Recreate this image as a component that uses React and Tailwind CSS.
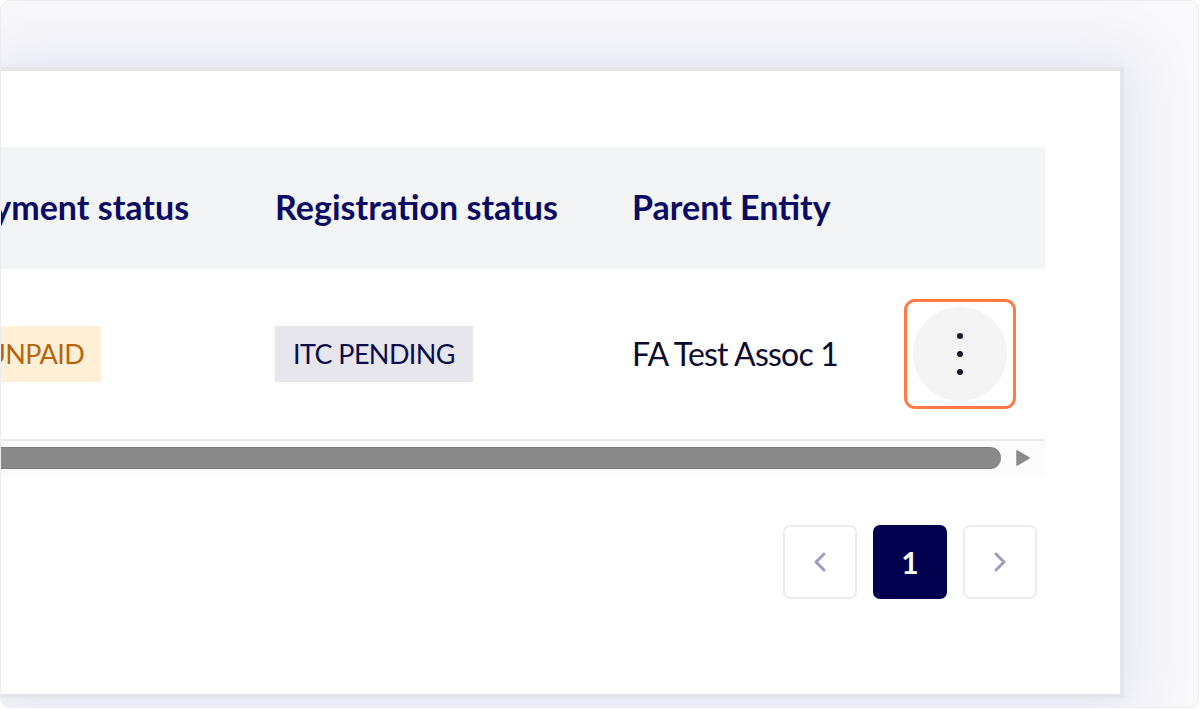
import React, { useLayoutEffect, useRef } from "react";

export default function App() {
  const scrollRef = useRef(null);
  const regRef = useRef(null);

  useLayoutEffect(() => {
    const c = scrollRef.current;
    const r = regRef.current;
    if (c && r) {
      const cr = c.getBoundingClientRect();
      const rr = r.getBoundingClientRect();
      c.scrollLeft = c.scrollLeft + (rr.left - cr.left) - 271;
    }
  }, []);

  const font = { fontFamily: "Lato, 'Noto Sans', sans-serif" };

  return (
    <div className="w-[1200px] h-[709px] bg-white" style={font}>
      <div className="w-[1199px] h-[708px] rounded-[10px] border border-[#ececf2] bg-[#f9f9fb] overflow-hidden pt-[66px] pr-[74px] pb-[9px]">
        <div className="h-full bg-white border-[4px] border-l-0 border-[#e5e5eb] shadow-[0_0_50px_12px_rgba(225,225,242,0.9)] pt-[76px] pr-[76px]">
          <div ref={scrollRef} className="overflow-hidden w-[1044px]">
            <div className="flex flex-col w-max min-w-full">
              {/* header */}
              <div className="flex items-center h-[122px] pb-[4px] bg-[#f3f4f6] text-[34px] font-bold text-[#0b0b66]">
                <div className="flex-none pl-[24px] pr-[86px] whitespace-nowrap">Payment status</div>
                <div ref={regRef} className="flex-none w-[357px] whitespace-nowrap">Registration status</div>
                <div className="flex-none w-[250px] whitespace-nowrap">Parent Entity</div>
                <div className="flex-none w-[163px]"></div>
              </div>
              {/* row */}
              <div className="flex items-center h-[172px] border-b-2 border-[#e9e9ee]">
                <div className="flex-none pl-[24px] pr-[86px] whitespace-nowrap">
                  <span className="invisible text-[34px] font-bold block h-0 overflow-hidden">Payment status</span>
                  <span className="inline-flex items-center h-[56px] pl-[30px] pr-[17px] bg-[#fdf0d7] text-[#b8640c] text-[27px] tracking-[-0.6px]">UNPAID</span>
                </div>
                <div className="flex-none w-[357px] whitespace-nowrap">
                  <span className="inline-flex items-center h-[56px] px-[18px] bg-[#e6e6ec] text-[#0c0c4e] text-[27px] tracking-[-0.6px]">ITC PENDING</span>
                </div>
                <div className="flex-none w-[250px] whitespace-nowrap text-[32px] text-[#0b0b2e] tracking-[-0.8px]">FA Test Assoc 1</div>
                <div className="flex-none w-[163px] flex items-center">
                  <div className="ml-[22px] w-[112px] h-[110px] rounded-[11px] border-[3px] border-[#ff7a45] flex items-center justify-center">
                    <div className="w-[94px] h-[94px] rounded-full bg-[#f4f4f4] flex flex-col items-center justify-center gap-[12px]">
                      <span className="w-[6px] h-[6px] rounded-full bg-[#1b1b2f]"></span>
                      <span className="w-[6px] h-[6px] rounded-full bg-[#1b1b2f]"></span>
                      <span className="w-[6px] h-[6px] rounded-full bg-[#1b1b2f]"></span>
                    </div>
                  </div>
                </div>
              </div>
            </div>
          </div>
          {/* scrollbar */}
          <div className="w-[1044px] h-[34px] bg-[#fbfbfb] flex items-center">
            <div className="flex-1 h-[22px] bg-[#8a8a8a] border-y border-[#7a7a7a] rounded-r-full"></div>
            <div className="w-[44px] flex items-center justify-center">
              <svg width="14" height="16" viewBox="0 0 14 16">
                <path d="M1 1 L13 8 L1 15 Z" fill="#8a8a8a" stroke="#8a8a8a" strokeWidth="1.5" strokeLinejoin="round" />
              </svg>
            </div>
          </div>
          {/* pagination */}
          <div className="w-[1044px] flex justify-end gap-[16px] pr-[8px] mt-[50px]">
            <button className="w-[74px] h-[74px] rounded-[7px] border-2 border-[#ebebf0] bg-white flex items-center justify-center">
              <svg width="16" height="24" viewBox="0 0 16 24" fill="none">
                <path d="M12 4 L4 12 L12 20" stroke="#9c9cc2" strokeWidth="3" strokeLinecap="round" strokeLinejoin="round" />
              </svg>
            </button>
            <button className="w-[74px] h-[74px] rounded-[7px] bg-[#00004f] text-white text-[30px] font-bold flex items-center justify-center">1</button>
            <button className="w-[74px] h-[74px] rounded-[7px] border-2 border-[#ebebf0] bg-white flex items-center justify-center">
              <svg width="16" height="24" viewBox="0 0 16 24" fill="none">
                <path d="M4 4 L12 12 L4 20" stroke="#9c9cc2" strokeWidth="3" strokeLinecap="round" strokeLinejoin="round" />
              </svg>
            </button>
          </div>
        </div>
      </div>
    </div>
  );
}
